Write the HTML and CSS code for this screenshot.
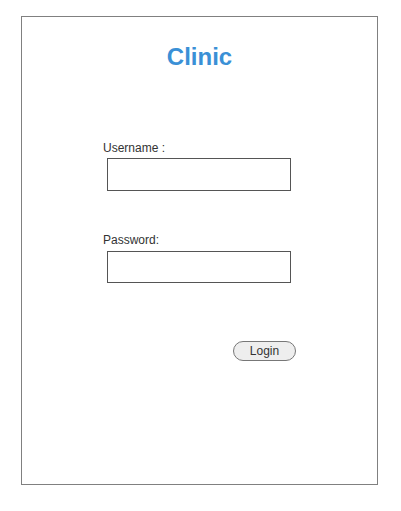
FILE: index.html
```html
<!DOCTYPE html>
<html>
<head>
<meta charset="utf-8">
<link rel="stylesheet" href="styles.css">
</head>
<body>
<div class="panel">
  <div class="title">Clinic</div>
  <div class="field field-user">
    <label class="label">Username :</label>
    <div class="input"></div>
  </div>
  <div class="field field-pass">
    <label class="label">Password:</label>
    <div class="input"></div>
  </div>
  <div class="actions">
    <button class="btn">Login</button>
  </div>
</div>
</body>
</html>
```
FILE: styles.css
```css
html, body {
  margin: 0;
  padding: 0;
  background: #ffffff;
  font-family: "Liberation Sans", Arial, sans-serif;
}
.panel {
  margin: 16px 0 0 21px;
  width: 357px;
  height: 469px;
  box-sizing: border-box;
  border: 1px solid #808080;
  padding-top: 26px;
  display: flex;
  flex-direction: column;
}
.title {
  font-size: 24px;
  font-weight: bold;
  line-height: 28px;
  color: #3a90d6;
  text-align: center;
}
.field {
  margin-left: 81px;
  display: flex;
  flex-direction: column;
  align-items: flex-start;
}
.field-user {
  margin-top: 70px;
}
.field-pass {
  margin-top: 42px;
}
.label {
  font-size: 12px;
  line-height: 14px;
  color: #333333;
}
.input {
  margin: 3px 0 0 4px;
  width: 184px;
  height: 33px;
  box-sizing: border-box;
  border: 1px solid #555555;
  background: #ffffff;
}
.field-pass .input {
  margin-top: 4px;
  height: 32px;
}
.actions {
  margin: 58px 0 0 211px;
}
.btn {
  width: 63px;
  height: 20px;
  padding: 0;
  box-sizing: border-box;
  border: 1px solid #777777;
  border-radius: 10px;
  background: #eeeeee;
  font-family: "Liberation Sans", Arial, sans-serif;
  font-size: 12px;
  color: #333333;
  line-height: 18px;
}
```
